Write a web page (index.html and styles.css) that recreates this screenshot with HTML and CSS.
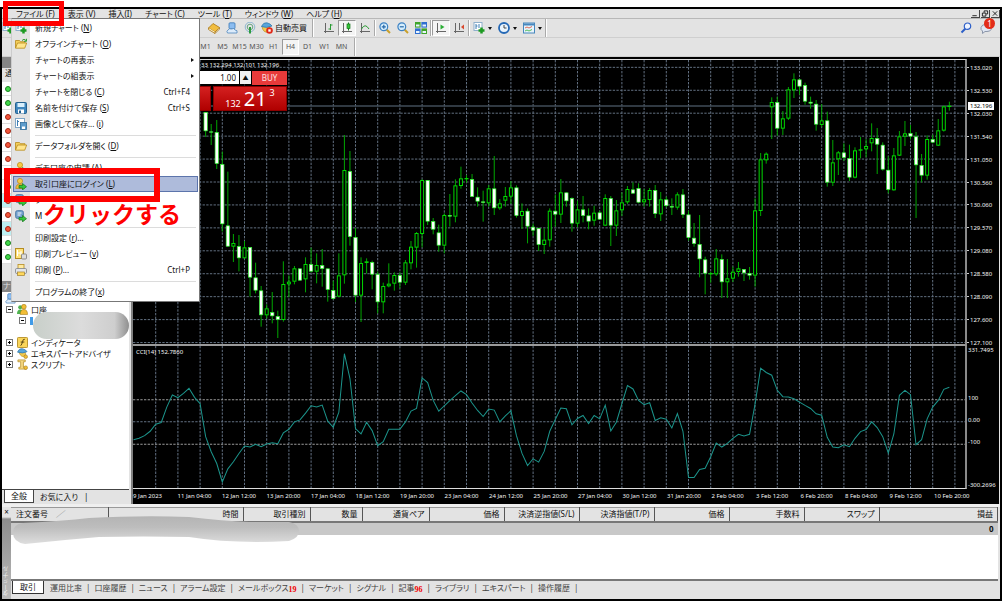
FILE: index.html
```html
<!DOCTYPE html>
<html lang="ja">
  <head>
    <meta charset="UTF-8" />
    <meta name="viewport" content="width=device-width, initial-scale=1.0" />
    <title>取引口座にログイン</title>
    <link rel="stylesheet" href="styles.css">
  </head>
  <body>
    <svg class="sprite" aria-hidden="true">
      <symbol id="i-newchart" viewBox="0 0 12 12">
        <rect x="1" y="0.5" width="8" height="8" fill="#fff" stroke="#8fb0cc" />
        <path d="M3 2v5M3 4h1.500M6 2v4" stroke="#3f7fb5" fill="none" />
        <path d="M8.500 5.500v6M5.500 8.500h6" stroke="#1d9a22" stroke-width="2.500" />
      </symbol>
      <symbol id="i-folder" viewBox="0 0 12 12">
        <path d="M0.500 10V2.500h4l1 1.200h4.500V5" fill="#f4cf5b" stroke="#b88a1c" stroke-width="0.800" />
        <path d="M0.500 10.200L2.500 5h9.200l-2 5.200z" fill="#ffe58c" stroke="#b88a1c" stroke-width="0.800" />
      </symbol>
      <symbol id="i-offline" viewBox="0 0 12 12">
        <use href="#i-folder" />
        <path d="M7 2.500Q9 0 11 2.500M11.500 0.800v2.500H9" stroke="#36a136" fill="none" />
      </symbol>
      <symbol id="i-save" viewBox="0 0 12 12">
        <rect x="0.500" y="0.500" width="11" height="11" rx="1" fill="#3f86bd" stroke="#24618f" />
        <rect x="2.500" y="1" width="7" height="4" fill="#d9effb" />
        <rect x="3" y="7.500" width="6" height="4" fill="#fff" />
        <rect x="4" y="8.500" width="2" height="2.500" fill="#24618f" />
      </symbol>
      <symbol id="i-picture" viewBox="0 0 12 12">
        <rect x="0.500" y="0.500" width="9" height="9" fill="#fff" stroke="#7fa5c5" />
        <path d="M2.500 2v6M2.500 3.500H4" stroke="#3f7fb5" />
        <rect x="5.500" y="4.500" width="6" height="7" fill="#5d9ccc" stroke="#2f6b9a" stroke-width="0.800" />
        <rect x="7" y="8.500" width="3" height="2.500" fill="#fff" />
      </symbol>
      <symbol id="i-login" viewBox="0 0 12 12">
        <circle cx="5" cy="3" r="2.600" fill="#f6c945" stroke="#b98a15" stroke-width="0.700" />
        <path d="M0.800 10.500Q1 6 5 6t4.500 4.500z" fill="#f3bd35" stroke="#b98a15" stroke-width="0.700" />
        <path d="M4 7.500h3.500V5.500l4 3.200-4 3.200V10H4z" fill="#35c73a" stroke="#14761a" stroke-width="0.700" />
      </symbol>
      <symbol id="i-web" viewBox="0 0 12 12">
        <rect x="0.500" y="0.500" width="8" height="8" rx="2" fill="#6d9cc9" stroke="#44719c" stroke-width="0.700" />
        <path d="M2.500 3h4M2.500 5h3" stroke="#fff" />
        <path d="M4 7.500h3.500V5.500l4 3.200-4 3.200V10H4z" fill="#35c73a" stroke="#14761a" stroke-width="0.700" />
      </symbol>
      <symbol id="i-preview" viewBox="0 0 12 12">
        <rect x="0.500" y="0.500" width="8" height="10" fill="#ffe27a" stroke="#b58c22" />
        <path d="M2.500 2v6M2.500 5h4M6 3v4" stroke="#fff" />
        <rect x="6.500" y="6" width="5" height="5" rx="1" fill="#dcdcdc" stroke="#777" stroke-width="0.800" />
      </symbol>
      <symbol id="i-print" viewBox="0 0 12 12">
        <rect x="3" y="0.500" width="6" height="5" fill="#ffeaa0" stroke="#b58c22" stroke-width="0.800" />
        <rect x="0.500" y="4.500" width="11" height="5" rx="1.200" fill="#e3e6ea" stroke="#7b8088" stroke-width="0.800" />
        <rect x="2.500" y="8" width="7" height="3.500" fill="#ffd85c" stroke="#a08030" stroke-width="0.700" />
      </symbol>
      <symbol id="i-book" viewBox="0 0 12 12">
        <path d="M0.500 6l4.500-4.500 6.500 4L7 10z" fill="#f1bd3f" stroke="#a87410" stroke-width="0.800" />
        <path d="M0.500 6v1.500l6.500 4v-1.500M7 11.500l4.500-4.500V5.500" fill="#fff3c9" stroke="#a87410" stroke-width="0.800" />
      </symbol>
      <symbol id="i-cloud" viewBox="0 0 12 12">
        <rect x="3" y="0.800" width="6" height="6" rx="1" fill="#8bbcf0" stroke="#3a78b8" stroke-width="0.800" />
        <path d="M1.500 11Q0 9 2 8q1-2 3.500-1Q8 5.500 9 8q3 0 2 3z" fill="#dcebfa" stroke="#4f86bd" stroke-width="0.800" />
      </symbol>
      <symbol id="i-signal" viewBox="0 0 12 12">
        <circle cx="6" cy="5" r="4.800" fill="none" stroke="#8fb7d0" />
        <circle cx="6" cy="5" r="2.800" fill="none" stroke="#6aa385" />
        <path d="M6 5v6.500" stroke="#2c9b3e" stroke-width="2" />
      </symbol>
      <symbol id="i-advisor" viewBox="0 0 12 12">
        <path d="M2 4.500Q5 12 9.500 8L9 4z" fill="#f2c84c" stroke="#b08a20" stroke-width="0.600" />
        <path d="M0.500 4.500Q2.500 0 6 0.800T11 4Q6 6.500 0.500 4.500z" fill="#58a5da" stroke="#2a72a8" stroke-width="0.700" />
        <circle cx="9.500" cy="9.500" r="2" fill="#f2bd35" stroke="#9c7412" stroke-width="0.600" />
      </symbol>
      <symbol id="i-expert" viewBox="0 0 12 12">
        <path d="M1 4.500Q2 11.500 8 10L9 4z" fill="#f2c84c" stroke="#b08a20" stroke-width="0.600" />
        <path d="M0.300 4.500Q2.500 0 6 0.800T11 4Q6 6.500 0.300 4.500z" fill="#58a5da" stroke="#2a72a8" stroke-width="0.700" />
        <circle cx="8.500" cy="8.500" r="3.300" fill="#e02a1a" />
        <rect x="7.300" y="7.300" width="2.400" height="2.400" fill="#fff" />
      </symbol>
      <symbol id="i-bars" viewBox="0 0 12 12">
        <path d="M2.500 1v10M1 9.500h10" stroke="#666" fill="none" />
        <path d="M7.500 2v6M7.500 3h2M5.500 7h2" stroke="#2a9c34" fill="none" />
      </symbol>
      <symbol id="i-candle" viewBox="0 0 12 12">
        <path d="M2.500 1v10M1 9.500h10" stroke="#666" fill="none" />
        <path d="M7.500 0.500v8" stroke="#14761a" />
        <rect x="6" y="2" width="3" height="4.500" fill="#35c73a" stroke="#14761a" stroke-width="0.700" />
      </symbol>
      <symbol id="i-line" viewBox="0 0 12 12">
        <path d="M2.500 1v10M1 9.500h10" stroke="#666" fill="none" />
        <path d="M2.500 7Q6 0.500 10 7" stroke="#2a9c34" fill="none" />
      </symbol>
      <symbol id="i-zoomin" viewBox="0 0 12 12">
        <path d="M7.500 7.500l3.500 3.500" stroke="#c9a02b" stroke-width="2" />
        <circle cx="4.800" cy="4.800" r="3.900" fill="#d5edfc" stroke="#3d82c4" stroke-width="1.200" />
        <path d="M2.800 4.800h4M4.800 2.800v4" stroke="#2466a8" stroke-width="1.200" />
      </symbol>
      <symbol id="i-zoomout" viewBox="0 0 12 12">
        <path d="M7.500 7.500l3.500 3.500" stroke="#c9a02b" stroke-width="2" />
        <circle cx="4.800" cy="4.800" r="3.900" fill="#d5edfc" stroke="#3d82c4" stroke-width="1.200" />
        <path d="M2.800 4.800h4" stroke="#2466a8" stroke-width="1.200" />
      </symbol>
      <symbol id="i-tile" viewBox="0 0 12 12">
        <rect width="5.600" height="5.600" fill="#3fa52b" /><rect x="6.400" width="5.600" height="5.600" fill="#2f6fd0" />
        <rect y="6.400" width="5.600" height="5.600" fill="#2f6fd0" /><rect x="6.400" y="6.400" width="5.600" height="5.600" fill="#3fa52b" />
        <path d="M1 3.500h3.500M7.500 3.500H11M1 10h3.500M7.500 10H11" stroke="#e8f4ff" stroke-width="2" />
      </symbol>
      <symbol id="i-scroll" viewBox="0 0 12 12">
        <path d="M2.500 1v10M1 9.500h10" stroke="#666" fill="none" />
        <path d="M5.500 2.500l4 2.500-4 2.500z" fill="#2cae36" />
      </symbol>
      <symbol id="i-shift" viewBox="0 0 12 12">
        <path d="M2.500 1v10M1 9.500h10M6.500 1v7" stroke="#666" fill="none" />
        <path d="M11 2.500L8 5l3 2.500z" fill="#d8492e" />
      </symbol>
      <symbol id="i-clock" viewBox="0 0 12 12">
        <circle cx="6" cy="6" r="5" fill="#e9f4fd" stroke="#2468b5" stroke-width="1.800" />
        <path d="M6 3v3h2.500" stroke="#444" fill="none" />
      </symbol>
      <symbol id="i-template" viewBox="0 0 12 12">
        <rect x="0.500" y="1" width="11" height="10" fill="#e8f3fb" stroke="#4787bd" />
        <path d="M0.500 2.500h11" stroke="#4787bd" stroke-width="2" />
        <path d="M2 6l2-1 2 1 3-1.500" stroke="#d8492e" stroke-width="0.800" fill="none" />
        <path d="M2 9l2-1 2 1 3-1.500" stroke="#2cae36" stroke-width="0.800" fill="none" />
      </symbol>
      <symbol id="i-search" viewBox="0 0 12 12">
        <path d="M5.500 6.500L1.500 10.500" stroke="#2d5fc8" stroke-width="2" />
        <circle cx="7.500" cy="4.200" r="3.200" fill="#eef4ff" stroke="#2d5fc8" stroke-width="1.200" />
      </symbol>
      <symbol id="i-accounts" viewBox="0 0 12 12">
        <circle cx="3.500" cy="3.500" r="2.200" fill="#4db34f" /><path d="M0 11q0-5 3.500-5T7 11z" fill="#4db34f" />
        <circle cx="7.500" cy="3" r="2.600" fill="#f2bd35" stroke="#9c7412" stroke-width="0.600" />
        <path d="M3.500 11.500q0-5.500 4-5.500t4 5.500z" fill="#f2bd35" stroke="#9c7412" stroke-width="0.600" />
      </symbol>
      <symbol id="i-indicator" viewBox="0 0 12 12">
        <rect x="0.500" y="0.500" width="11" height="11" rx="1" fill="#f9d55a" stroke="#b58c22" />
        <path d="M8.500 2.500Q6.500 2 6 5T4 9.500M4 5.500h4" stroke="#4a3a10" fill="none" />
      </symbol>
      <symbol id="i-script" viewBox="0 0 12 12">
        <path d="M1 1h8v2H7v6h3v2H2V9h2V3H1z" fill="#f6d983" stroke="#b58c22" stroke-width="0.800" />
        <circle cx="9.500" cy="9.500" r="2" fill="#f2bd35" stroke="#9c7412" stroke-width="0.600" />
      </symbol>
    </svg>

    <div class="window">
      <nav class="menubar">
        <button>ファイル (<u>F</u>)</button>
        <button>表示 (<u>V</u>)</button>
        <button>挿入(<u>I</u>)</button>
        <button>チャート (<u>C</u>)</button>
        <button>ツール (<u>T</u>)</button>
        <button>ウィンドウ (<u>W</u>)</button>
        <button>ヘルプ (<u>H</u>)</button>
        <div class="window-buttons">
          <button aria-label="最小化"><svg viewBox="0 0 8 8"><path d="M1 6.500h5" /></svg></button>
          <button aria-label="元に戻す"><svg viewBox="0 0 8 8"><path d="M3 3V1h4v3.500H5.500M1 3.500h4v3.500H1z" /></svg></button>
          <button aria-label="閉じる"><svg viewBox="0 0 8 8"><path d="M1.500 1.500l5 5M6.500 1.500l-5 5" /></svg></button>
        </div>
      </nav>

      <div class="toolbar">
        <button aria-label="新規"><svg><use href="#i-newchart" /></svg></button>
        <div class="tools first">
          <button aria-label="メタエディター"><svg><use href="#i-book" /></svg></button>
          <button aria-label="VPS"><svg><use href="#i-cloud" /></svg></button>
          <button aria-label="シグナル"><svg><use href="#i-signal" /></svg></button>
          <button class="auto"><svg><use href="#i-expert" /></svg>自動売買</button>
        </div>
        <div class="tools">
          <button aria-label="バー"><svg><use href="#i-bars" /></svg></button>
          <button class="on" aria-label="ローソク足"><svg><use href="#i-candle" /></svg></button>
          <button aria-label="ライン"><svg><use href="#i-line" /></svg></button>
          <i class="divider"></i>
          <button aria-label="拡大"><svg><use href="#i-zoomin" /></svg></button>
          <button aria-label="縮小"><svg><use href="#i-zoomout" /></svg></button>
          <button aria-label="整列"><svg><use href="#i-tile" /></svg></button>
          <i class="divider"></i>
          <button class="on" aria-label="自動スクロール"><svg><use href="#i-scroll" /></svg></button>
          <button aria-label="チャートシフト"><svg><use href="#i-shift" /></svg></button>
          <i class="divider"></i>
          <button class="drop" aria-label="インディケータ"><svg><use href="#i-newchart" /></svg></button>
          <button class="drop" aria-label="時間足"><svg><use href="#i-clock" /></svg></button>
          <button class="drop" aria-label="定型チャート"><svg><use href="#i-template" /></svg></button>
        </div>
        <div class="right-tools">
          <button aria-label="検索"><svg><use href="#i-search" /></svg></button>
          <button class="chat" aria-label="チャット">
            <svg viewBox="0 0 12 12"><path d="M1 5.500Q2 2 6 2.500T11 6 7 9.500H5L2.500 11.500V9Q0.500 8 1 5.500z" fill="#dfe6f3" stroke="#8c97aa" /></svg>
            <span class="badge">1</span>
          </button>
        </div>
      </div>

      <div class="toolbar periods">
        <div class="tools">
          <button>M1</button><button>M5</button><button>M15</button><button>M30</button><button>H1</button><button class="on">H4</button><button>D1</button><button>W1</button><button>MN</button>
        </div>
      </div>

      <main class="workspace">
        <aside class="sidebar">
          <div class="panel-title"></div>
          <div class="panel-head">通</div>
          <ul class="symbols" id="symbols"></ul>
          <div class="symbols-foot"></div>
          <div class="panel-title">ナ</div>
          <ul class="tree">
            <li class="root"><svg><use href="#i-cloud" /></svg></li>
            <li><i class="box minus"></i><svg><use href="#i-accounts" /></svg>口座</li>
            <li class="sub"><i class="box minus"></i><b class="flag"></b></li>
            <li></li>
            <li><i class="box plus"></i><svg><use href="#i-indicator" /></svg>インディケータ</li>
            <li><i class="box plus"></i><svg><use href="#i-advisor" /></svg>エキスパートアドバイザ</li>
            <li><i class="box plus"></i><svg><use href="#i-script" /></svg>スクリプト</li>
            <li class="smudge"></li>
          </ul>
          <div class="side-tabs">
            <button class="active">全般</button>
            <button>お気に入り</button>
          </div>
        </aside>

        <section class="chart">
          <div class="plot price">
            <svg id="priceChart" viewBox="0 -120 2499 852" preserveAspectRatio="none"></svg>
            <div class="ohlc">33 132.294 132.101 132.196</div>
            <div class="trade">
              <button class="sell" aria-label="SELL"></button>
              <input type="text" value="1.00" aria-label="数量" />
              <button class="spin" aria-label="増やす">▲</button>
              <button class="buy-label">BUY</button>
              <button class="sell-price" aria-label="SELL"></button>
              <button class="buy-price"><span>132</span><b>21</b><sup>3</sup></button>
            </div>
          </div>
          <div class="axis price-axis">
            <span>133.020</span><span>132.530</span><span>132.030</span><span>131.540</span><span>131.050</span><span>130.560</span><span>130.060</span><span>129.570</span><span>129.080</span><span>128.580</span><span>128.090</span><span>127.600</span><span>127.100</span>
            <em>132.196</em>
          </div>
          <div class="plot cci">
            <svg id="cciChart" viewBox="0 18 2499 423" preserveAspectRatio="none"></svg>
            <div class="cci-label">CCI(14) 152.7860</div>
          </div>
          <div class="axis cci-axis">
            <span>331.7495</span><span>100</span><span>0.00</span><span>-100</span><span>-300.2696</span>
          </div>
          <div class="dates">
            <span>9 Jan 2023</span><span>11 Jan 04:00</span><span>12 Jan 12:00</span><span>13 Jan 20:00</span><span>17 Jan 04:00</span><span>18 Jan 12:00</span><span>19 Jan 20:00</span><span>23 Jan 04:00</span><span>24 Jan 12:00</span><span>25 Jan 20:00</span><span>27 Jan 04:00</span><span>30 Jan 12:00</span><span>31 Jan 20:00</span><span>2 Feb 04:00</span><span>3 Feb 12:00</span><span>6 Feb 20:00</span><span>8 Feb 04:00</span><span>9 Feb 12:00</span><span>10 Feb 20:00</span>
          </div>
        </section>
      </main>

      <section class="terminal">
        <div class="terminal-side"><button aria-label="閉じる">×</button><span>ターミナル</span></div>
        <div class="terminal-main">
          <table>
            <colgroup>
              <col class="w97"><col class="w135"><col class="w67"><col class="w52"><col class="w67"><col class="w75"><col class="w75"><col class="w75"><col class="w75"><col class="w75"><col class="w75"><col>
            </colgroup>
            <thead>
              <tr>
                <th class="order">注文番号<i>∕</i></th><th>時間</th><th>取引種別</th><th>数量</th><th>通貨ペア</th><th>価格</th><th>決済逆指値(S/L)</th><th>決済指値(T/P)</th><th>価格</th><th>手数料</th><th>スワップ</th><th>損益</th>
              </tr>
            </thead>
            <tbody>
              <tr><td colspan="11"></td><td>0</td></tr>
            </tbody>
          </table>
          <svg class="eraser" viewBox="0 0 286 28" aria-hidden="true">
            <defs>
              <linearGradient id="er" x1="0" y1="0" x2="0" y2="1">
                <stop offset="0" stop-color="#b4b4b4" /><stop offset="0.400" stop-color="#bdbdbd" /><stop offset="1" stop-color="#dedede" />
              </linearGradient>
            </defs>
            <path d="M10 7Q50 5 76 2Q130-1 176 1Q210 5 236 6H276Q286 8 286 15T276 25Q220 28 176 21Q130 20 86 21Q50 24 12 28Q0 26 0 17T10 7z" fill="url(#er)" />
          </svg>
          <div class="tabs">
            <button class="active">取引</button><button>運用比率</button><button>口座履歴</button><button>ニュース</button><button>アラーム設定</button><button>メールボックス<b>19</b></button><button>マーケット</button><button>シグナル</button><button>記事<b>96</b></button><button>ライブラリ</button><button>エキスパート</button><button>操作履歴</button>
          </div>
        </div>
      </section>

      <div class="menu" role="menu">
        <button><svg><use href="#i-newchart" /></svg>新規チャート (<u>N</u>)</button>
        <button><svg><use href="#i-offline" /></svg>オフラインチャート (<u>O</u>)</button>
        <button><svg></svg>チャートの再表示<kbd class="arrow"></kbd></button>
        <button><svg></svg>チャートの組表示<kbd class="arrow"></kbd></button>
        <button><svg></svg>チャートを閉じる (<u>C</u>)<kbd>Ctrl+F4</kbd></button>
        <button><svg><use href="#i-save" /></svg>名前を付けて保存 (<u>S</u>)<kbd>Ctrl+S</kbd></button>
        <button><svg><use href="#i-picture" /></svg>画像として保存... (<u>i</u>)</button>
        <hr />
        <button><svg><use href="#i-folder" /></svg>データフォルダを開く (<u>D</u>)</button>
        <hr />
        <button><svg><use href="#i-login" /></svg>デモ口座の申請 (<u>A</u>)</button>
        <button class="selected"><svg><use href="#i-login" /></svg>取引口座にログイン (<u>L</u>)</button>
        <button><svg><use href="#i-web" /></svg>フ</button>
        <button><svg><use href="#i-web" /></svg>M</button>
        <hr />
        <button><svg></svg>印刷設定 (<u>r</u>)...</button>
        <button><svg><use href="#i-preview" /></svg>印刷プレビュー (<u>v</u>)</button>
        <button><svg><use href="#i-print" /></svg>印刷 (<u>P</u>)...<kbd>Ctrl+P</kbd></button>
        <hr />
        <button><svg></svg>プログラムの終了(<u>x</u>)</button>
      </div>
    </div>

    <!-- 手順の強調表示 -->
    <div class="mark mark-file"></div>
    <div class="mark mark-login"></div>
    <div class="mark-text">クリックする</div>

    <script src="chart.js"></script>
  </body>
</html>
```

FILE: styles.css
```css
* {
  margin: 0;
  padding: 0;
  box-sizing: border-box;
}

body {
  font-family: "Noto Sans", "Noto Sans CJK JP", sans-serif;
  font-feature-settings: "palt";
  font-size: 8px;
  line-height: 10px;
  color: #111;
  background: #fff;
  height: 100vh;
  padding-top: 7px;
  position: relative;
  overflow: hidden;
}

button,
input {
  font: inherit;
  font-feature-settings: inherit;
  color: inherit;
  background: none;
  border: none;
  white-space: nowrap;
}

ul {
  list-style: none;
}

.sprite {
  position: absolute;
  width: 0;
  height: 0;
}

.window {
  height: 100%;
  border: 2px solid #000;
  background: #e3e3e3;
  display: flex;
  flex-direction: column;
}

/* メニューバー */
.menubar {
  height: 10px;
  padding-left: 14px;
  display: flex;
  align-items: center;
  gap: 13px;
  border-bottom: 1px solid #b8b8b8;
}

.window-buttons {
  margin-left: auto;
  display: flex;
  gap: 1px;
}

.window-buttons button {
  width: 9px;
  height: 8px;
  border-right: 1px solid #444;
  border-bottom: 1px solid #444;
}

.window-buttons svg {
  display: block;
  width: 8px;
  height: 7px;
  fill: none;
  stroke: #111;
}

/* ツールバー */
.toolbar {
  height: 19px;
  display: flex;
  align-items: center;
  border-bottom: 1px solid #cfcfcf;
}

.toolbar svg {
  width: 12px;
  height: 12px;
  display: block;
}

.tools {
  height: 18px;
  display: flex;
  align-items: center;
  padding-left: 7px;
  border-right: 1px solid #aaa;
  box-shadow: 1px 0 #fff;
}

.tools.first {
  margin-left: 184px;
  padding-right: 4px;
}

.tools button {
  width: 18px;
  height: 16px;
  display: flex;
  align-items: center;
  justify-content: center;
  border: 1px solid transparent;
}

.tools .auto {
  width: auto;
  gap: 2px;
  padding-left: 1px;
}

.tools .on {
  background: #f4f4f4;
  border-color: #999 #fff #fff #999;
}

.tools .drop {
  width: 25px;
  gap: 3px;
}

.drop::after {
  content: "";
  border: 2px solid transparent;
  border-top: 3px solid #111;
  border-bottom: 0;
}

.divider {
  width: 2px;
  height: 16px;
  border-left: 1px solid #aaa;
  border-right: 1px solid #fff;
}

.right-tools {
  margin-left: auto;
  margin-right: 4px;
  display: flex;
  gap: 8px;
}

.chat {
  position: relative;
  width: 16px;
}

.badge {
  position: absolute;
  left: 4px;
  top: -4px;
  width: 11px;
  height: 11px;
  border-radius: 50%;
  background: #e32c18;
  color: #fff;
  line-height: 11px;
}

.periods .tools {
  margin-left: 188px;
  padding-right: 4px;
}

.periods .tools button {
  width: 17px;
  font-size: 7px;
  color: #555;
}

/* 左パネル */
.workspace {
  flex: 1;
  min-height: 0;
  display: flex;
}

.sidebar {
  width: 127px;
  display: flex;
  flex-direction: column;
  margin-right: 2px;
}

.panel-title {
  height: 11px;
  padding-left: 1px;
  background: #858585;
  color: #ddd;
}

.panel-head {
  height: 14px;
  padding-left: 3px;
}

.symbols li {
  height: 14px;
  padding-left: 3px;
  background: #fff;
  border-bottom: 1px solid #ddd;
  display: flex;
  align-items: center;
}

.symbols li::before {
  content: "";
  width: 4px;
  height: 4px;
  border-radius: 50%;
  border: 1px solid #a32613;
  background: #f4553a;
}

.symbols .up::before {
  background: #42d84a;
  border-color: #17801d;
}

.symbols .touched {
  background: #bdeff2;
}

.symbols-foot {
  height: 17px;
}

.tree {
  position: relative;
  flex: 1;
  padding: 1px 0 0 3px;
  background: #fff;
}

.tree li {
  height: 11px;
  display: flex;
  align-items: center;
  gap: 3px;
}

.tree svg {
  width: 11px;
  height: 11px;
}

.tree .sub {
  padding-left: 13px;
}

.box {
  width: 7px;
  height: 7px;
  margin: 0 1px;
  border: 1px solid #777;
  background: linear-gradient(#000, #000) center / 3px 1px no-repeat;
}

.plus {
  background: linear-gradient(#000, #000) center / 3px 1px no-repeat, linear-gradient(#000, #000) center / 1px 3px no-repeat;
}

.flag {
  width: 3px;
  height: 8px;
  background: #3f9be8;
}

.tree .smudge {
  position: absolute;
  left: 31px;
  top: 20px;
  width: 96px;
  height: 27px;
  border-radius: 14px;
  background: linear-gradient(90deg, #c8cfc9, #dcdcdc 50%, #cecece 85%, #8f8f8f);
}

.side-tabs {
  height: 15px;
  padding-left: 2px;
  display: flex;
  border-top: 1px solid #444;
}

.side-tabs button {
  height: 13px;
  padding: 0 6px;
}

.side-tabs button::after {
  content: "|";
  padding-left: 6px;
}

.side-tabs .active {
  background: #fff;
  border: 1px solid #444;
  border-top: none;
}

.side-tabs .active::after {
  content: none;
}

/* チャート */
.chart {
  flex: 1;
  min-width: 0;
  margin-right: 1px;
  display: grid;
  grid-template-columns: 1fr 32px;
  grid-template-rows: 1fr 143px 15px;
  background: #000;
  color: #f4f4f4;
  border-left: 2px solid #808080;
  font-size: 6px;
  line-height: 8px;
}

.plot {
  position: relative;
  min-height: 0;
  border-right: 2px solid #8a8a8a;
}

.plot > svg {
  display: block;
  width: 100%;
  height: 100%;
}

.price {
  margin-top: 2px;
  border-top: 1px solid #ddd;
  border-bottom: 2px solid #9a9a9a;
}

.cci {
  border-bottom: 1px solid #ddd;
}

.grid {
  stroke: #637183;
  stroke-width: 3;
  stroke-dasharray: 7 4;
}

.level {
  stroke: #9a9a9a;
  stroke-width: 3;
  stroke-dasharray: 7 4;
}

.current {
  stroke: #414c58;
  stroke-width: 5;
}

.wick {
  stroke: #00a800;
  stroke-width: 3;
}

.bull {
  fill: #000;
  stroke: #00d800;
  stroke-width: 3;
}

.bear {
  fill: #fff;
  stroke: #30f830;
  stroke-width: 2;
}

.cci-line {
  fill: none;
  stroke: #1c958c;
  stroke-width: 3;
}

.axis {
  min-height: 0;
}

.axis span,
.axis em {
  display: block;
  font-style: normal;
}

.axis span::before {
  content: "";
  display: inline-block;
  width: 2px;
  height: 1px;
  margin-right: 1px;
  vertical-align: 2px;
  background: #ccc;
}

.price-axis {
  position: relative;
  display: flex;
  flex-direction: column;
  justify-content: space-between;
  padding-top: 7px;
  margin-bottom: -1px;
}

.price-axis em {
  position: absolute;
  left: 1px;
  top: 45px;
  padding: 0 2px;
  background: #fff;
  color: #000;
}

.cci-axis {
  display: grid;
  grid-template-rows: 48fr 22fr 22fr 43fr 8fr;
}

.cci-axis span::before {
  width: 0;
}

.dates {
  grid-column: 1 / 3;
  display: flex;
  padding-top: 3px;
}

.dates span {
  flex: 0 0 5.14%;
  white-space: nowrap;
}

.ohlc {
  position: absolute;
  left: 68px;
  top: 1px;
}

.cci-label {
  position: absolute;
  left: 3px;
  top: 2px;
}

.trade {
  position: absolute;
  left: 3px;
  top: 11px;
  display: grid;
  grid-template-columns: 48px 54px 11px 35px;
  grid-template-rows: 14px 25px;
  gap: 1px;
  font-size: 8px;
  line-height: 12px;
}

.sell,
.buy-label {
  background: #e83a3a;
  color: #ffe3e3;
}

.trade input {
  width: 54px;
  height: 13px;
  padding-right: 3px;
  text-align: right;
  background: #fff;
  color: #111;
}

.spin {
  background: #f0f0f0;
  color: #111;
  height: 13px;
  font-size: 6px;
}

.trade .sell-price,
.trade .buy-price {
  background: linear-gradient(#d42020, #b00000);
  border: 1px solid #8c0000;
  color: #fff;
}

.trade .sell-price {
  grid-column: 1 / 3;
  grid-row: 2;
  width: 75px;
}

.trade .buy-price {
  grid-column: 2 / 5;
  grid-row: 2;
  margin-left: 28px;
  display: flex;
  align-items: flex-end;
  justify-content: center;
  gap: 3px;
}

.buy-price span {
  font-size: 9px;
}

.buy-price b {
  font-size: 20px;
  font-weight: normal;
  line-height: 22px;
}

.buy-price sup {
  align-self: flex-start;
  font-size: 9px;
  line-height: 11px;
}

/* ターミナル */
.terminal {
  height: 95px;
  display: flex;
  border-top: 3px solid #efefef;
}

.terminal-side {
  width: 9px;
  background: linear-gradient(#e3e3e3 10px, #8c8c8c 12px, #bcbcbc);
  color: #eee;
  display: flex;
  flex-direction: column;
  align-items: center;
  justify-content: space-between;
  padding-bottom: 3px;
}

.terminal-side button {
  color: #111;
}

.terminal-side span {
  writing-mode: vertical-rl;
  transform: rotate(180deg);
  font-size: 6px;
  line-height: 9px;
}

.terminal-main {
  flex: 1;
  position: relative;
  margin-right: 2px;
  display: flex;
  flex-direction: column;
  background: #fff;
}

table {
  width: 100%;
  table-layout: fixed;
  border-collapse: collapse;
}

.w97 { width: 97px; }
.w135 { width: 135px; }
.w67 { width: 67px; }
.w52 { width: 52px; }
.w75 { width: 75px; }

th {
  height: 14px;
  padding-right: 4px;
  font-weight: normal;
  text-align: right;
  white-space: nowrap;
  background: #e3e3e3;
  border-right: 1px solid #555;
  border-top: 1px solid #999;
  border-bottom: 2px solid #777;
}

th.order {
  text-align: left;
  padding-left: 5px;
}

th i {
  padding-left: 8px;
  color: #888;
}

td {
  height: 13px;
  padding-right: 4px;
  text-align: right;
  font-weight: bold;
  background: #c8c8c8;
}

.eraser {
  position: absolute;
  left: 2px;
  top: 9px;
  width: 286px;
  height: 28px;
}

.tabs {
  margin-top: auto;
  height: 20px;
  display: flex;
  align-items: flex-start;
  background: #e3e3e3;
  border-top: 2px solid #777;
}

.tabs button {
  height: 13px;
  margin-left: 4px;
  display: flex;
  align-items: center;
  color: #444;
}

.tabs button::after {
  content: "|";
  padding-left: 4px;
}

.tabs .active {
  margin: 0 2px 0 1px;
  padding: 0 7px;
  color: #111;
  background: #fff;
  border: 1px solid #333;
  border-top: none;
}

.tabs .active::after {
  content: none;
}

.tabs b {
  padding-top: 4px;
  color: #f00000;
  font-family: "Liberation Serif", serif;
}

/* ファイルメニュー */
.menu {
  position: absolute;
  left: 11px;
  top: 18px;
  width: 189px;
  padding: 1px;
  background: linear-gradient(90deg, #e3e3e3 18px, #fff 18px);
  border: 1px solid #777;
  border-left-color: #ccc;
}

.menu button {
  width: 100%;
  height: 16px;
  display: flex;
  align-items: center;
  white-space: pre;
  padding-left: 2px;
  padding-right: 8px;
}

.menu svg {
  width: 12px;
  height: 12px;
  margin-right: 8px;
}

.menu .selected {
  background: #aebbdb;
  border: 1px solid #5c74ab;
  padding-left: 1px;
}

.menu hr {
  height: 1px;
  margin: 3px 2px 2px 22px;
  border: none;
  background: #dcdcdc;
}

.menu kbd {
  margin-left: auto;
  font-family: inherit;
}

.menu .arrow {
  margin-right: -4px;
  border: 2px solid transparent;
  border-left: 3px solid #111;
  border-right: 0;
}

/* 赤枠と説明 */
.mark {
  position: absolute;
  border: 6px solid #f00;
}

.mark-file {
  left: 3px;
  top: 1px;
  width: 61px;
  height: 25px;
  border-width: 5px;
}

.mark-login {
  left: 4px;
  top: 168px;
  width: 156px;
  height: 34px;
}

.mark-text {
  position: absolute;
  left: 43px;
  top: 201px;
  font-size: 23px;
  line-height: 27px;
  font-weight: bold;
  font-feature-settings: normal;
  color: #f00;
}
```

FILE: chart.js
```javascript
const STEP = 16.67;
const START = 1.5;
const FIRST = 13;

// [high, body top, body bottom, low, up]
const candles = [
  [36, 36, 94, 111, 0], [72, 94, 98, 135, 0], [60, 96, 192, 207, 0], [155, 192, 373, 395, 0],
  [215, 376, 440, 440, 0], [402, 429, 440, 486, 1], [405, 438, 475, 514, 0], [423, 442, 475, 475, 1],
  [441, 441, 533, 590, 0], [488, 532, 572, 580, 0], [558, 571, 646, 680, 0], [613, 625, 646, 655, 1],
  [576, 636, 649, 670, 0], [632, 648, 660, 714, 0], [484, 552, 660, 665, 1], [526, 545, 553, 592, 1],
  [498, 505, 545, 553, 1], [505, 505, 542, 543, 0], [472, 492, 538, 577, 1], [443, 492, 515, 517, 0],
  [460, 495, 515, 550, 1], [447, 495, 507, 560, 0], [505, 505, 570, 605, 0], [542, 570, 597, 598, 0],
  [460, 526, 590, 592, 1], [105, 210, 526, 551, 1], [153, 213, 411, 437, 0], [384, 411, 587, 606, 0],
  [472, 489, 587, 666, 1], [475, 484, 489, 521, 1], [482, 486, 524, 568, 0], [515, 522, 607, 640, 0],
  [548, 558, 607, 640, 1], [490, 551, 559, 562, 1], [517, 525, 551, 572, 1], [517, 525, 548, 565, 0],
  [480, 487, 548, 555, 1], [423, 440, 490, 508, 1], [396, 399, 443, 503, 1], [238, 240, 402, 442, 1],
  [240, 240, 365, 375, 0], [354, 363, 389, 403, 0], [374, 397, 437, 455, 0], [340, 345, 437, 460, 1],
  [282, 345, 350, 380, 0], [238, 256, 350, 367, 1], [200, 235, 258, 266, 1], [225, 234, 238, 248, 1],
  [222, 237, 291, 291, 0], [262, 290, 305, 320, 0], [272, 304, 309, 365, 0], [255, 265, 310, 320, 1],
  [168, 265, 325, 345, 0], [297, 310, 325, 330, 1], [261, 288, 302, 320, 1], [243, 262, 290, 312, 1],
  [256, 262, 348, 353, 0], [310, 333, 348, 387, 1], [325, 332, 380, 430, 0], [371, 380, 392, 408, 0],
  [383, 384, 435, 453, 0], [385, 419, 435, 462, 1], [325, 332, 421, 440, 1], [284, 332, 344, 380, 0],
  [237, 277, 344, 369, 1], [277, 277, 304, 320, 0], [292, 294, 371, 395, 0], [302, 328, 371, 382, 1],
  [288, 328, 348, 367, 0], [325, 346, 365, 388, 0], [317, 338, 362, 377, 1], [332, 337, 359, 360, 0],
  [283, 294, 377, 377, 1], [288, 294, 377, 438, 0], [300, 331, 377, 408, 1], [277, 307, 331, 348, 1],
  [258, 267, 307, 312, 1], [247, 268, 281, 282, 0], [250, 264, 308, 310, 0], [267, 298, 307, 320, 1],
  [264, 270, 300, 320, 1], [255, 270, 342, 354, 0], [276, 298, 343, 363, 1], [290, 298, 318, 322, 0],
  [295, 318, 323, 345, 0], [277, 283, 323, 329, 1], [267, 283, 345, 354, 0], [332, 343, 414, 422, 0],
  [369, 413, 432, 440, 0], [345, 432, 478, 532, 0], [470, 478, 521, 583, 0], [515, 519, 522, 548, 1],
  [447, 475, 523, 528, 1], [463, 477, 547, 594, 0], [477, 535, 547, 594, 1], [500, 515, 536, 546, 1],
  [486, 505, 516, 530, 1], [507, 507, 520, 543, 0], [501, 519, 527, 539, 0], [295, 331, 527, 560, 1],
  [159, 178, 333, 348, 1], [157, 161, 181, 191, 1], [-8, 6, 22, 117, 1], [-10, 6, 86, 107, 0],
  [33, 55, 86, 105, 1], [-39, -32, 56, 60, 1], [-80, -62, -29, -6, 1], [-64, -62, -40, -16, 0],
  [-52, -45, 5, 14, 0], [-10, 5, 11, 26, 0], [0, 11, 74, 92, 0], [12, 61, 75, 81, 1],
  [35, 61, 248, 260, 0], [120, 187, 248, 258, 1], [153, 157, 178, 225, 1], [130, 157, 174, 183, 0],
  [134, 174, 233, 243, 0], [142, 151, 233, 235, 1], [111, 148, 151, 175, 1], [118, 138, 148, 172, 1],
  [70, 114, 130, 154, 1], [84, 114, 134, 222, 0], [127, 134, 209, 212, 0], [169, 209, 270, 280, 0],
  [144, 166, 271, 272, 1], [93, 109, 167, 168, 1], [63, 100, 110, 138, 1], [75, 99, 110, 118, 0],
  [96, 109, 196, 354, 0], [162, 195, 227, 247, 0], [106, 117, 227, 239, 1], [104, 117, 128, 130, 0],
  [57, 91, 137, 138, 1], [17, 19, 92, 95, 1], [5, 17, 20, 32, 1],
];

const cci = [
  297, 293, 285, 272, 251, 246, 200, 164, 172, 159, 144, 171, 190, 288, 333, 368, 423, 384, 363, 338,
  316, 319, 311, 318, 310, 306, 309, 277, 266, 244, 238, 218, 196, 200, 194, 242, 260, 215, 41, 115,
  264, 280, 245, 270, 315, 303, 266, 266, 266, 244, 212, 204, 113, 127, 180, 212, 196, 181, 166, 152,
  163, 188, 210, 228, 206, 209, 244, 226, 211, 285, 338, 374, 354, 364, 332, 272, 237, 203, 205, 253,
  234, 225, 249, 225, 235, 194, 271, 245, 190, 136, 146, 180, 193, 187, 240, 232, 236, 262, 219, 272,
  410, 410, 386, 382, 348, 307, 319, 308, 293, 281, 286, 281, 190, 84, 97, 105, 150, 169, 170, 175,
  185, 195, 204, 220, 224, 290, 319, 321, 312, 318, 293, 273, 267, 244, 261, 288, 337, 280, 165, 150,
  163, 312, 297, 235, 200, 180, 147, 141,
];

const line = (cls, x1, y1, x2, y2) =>
  `<line class="${cls}" x1="${x1}" y1="${y1}" x2="${x2}" y2="${y2}" />`;

function verticalGrid(top, bottom) {
  let out = "";
  for (let i = 1; i <= 37; i++) {
    const x = START + i * STEP * 4;
    out += line("grid", x, top, x, bottom);
  }
  return out;
}

function drawPrice() {
  let out = verticalGrid(-120, 732);
  for (let i = 0; i < 13; i++) {
    const y = -98 + i * 68.8;
    out += line("grid", 0, y, 2499, y);
  }
  out += line("current", 0, 18, 2499, 18);
  candles.forEach(([high, top, bottom, low, up], i) => {
    const x = START + (i + FIRST) * STEP;
    const height = Math.max(bottom - top - 3, 1);
    const width = up ? 9 : 10;
    out += line("wick", x, high, x, low);
    out += `<rect class="${up ? "bull" : "bear"}" x="${x - width / 2}" y="${top + 1.5}" width="${width}" height="${height}" />`;
  });
  document.getElementById("priceChart").innerHTML = out;
}

function drawCci() {
  const points = cci.map((y, i) => `${START + i * STEP},${y}`).join(" ");
  document.getElementById("cciChart").innerHTML =
    verticalGrid(18, 441) +
    line("level", 0, 178, 2499, 178) +
    line("grid", 0, 244, 2499, 244) +
    line("level", 0, 311, 2499, 311) +
    `<polyline class="cci-line" points="${points}" />`;
}

function drawSymbols() {
  const rows = ["up", "up", "", "", "", "", "up", "up", "touched", "", "touched", "up", "up"];
  document.getElementById("symbols").innerHTML = rows
    .map((name) => `<li class="${name}"></li>`)
    .join("");
}

drawPrice();
drawCci();
drawSymbols();
```
